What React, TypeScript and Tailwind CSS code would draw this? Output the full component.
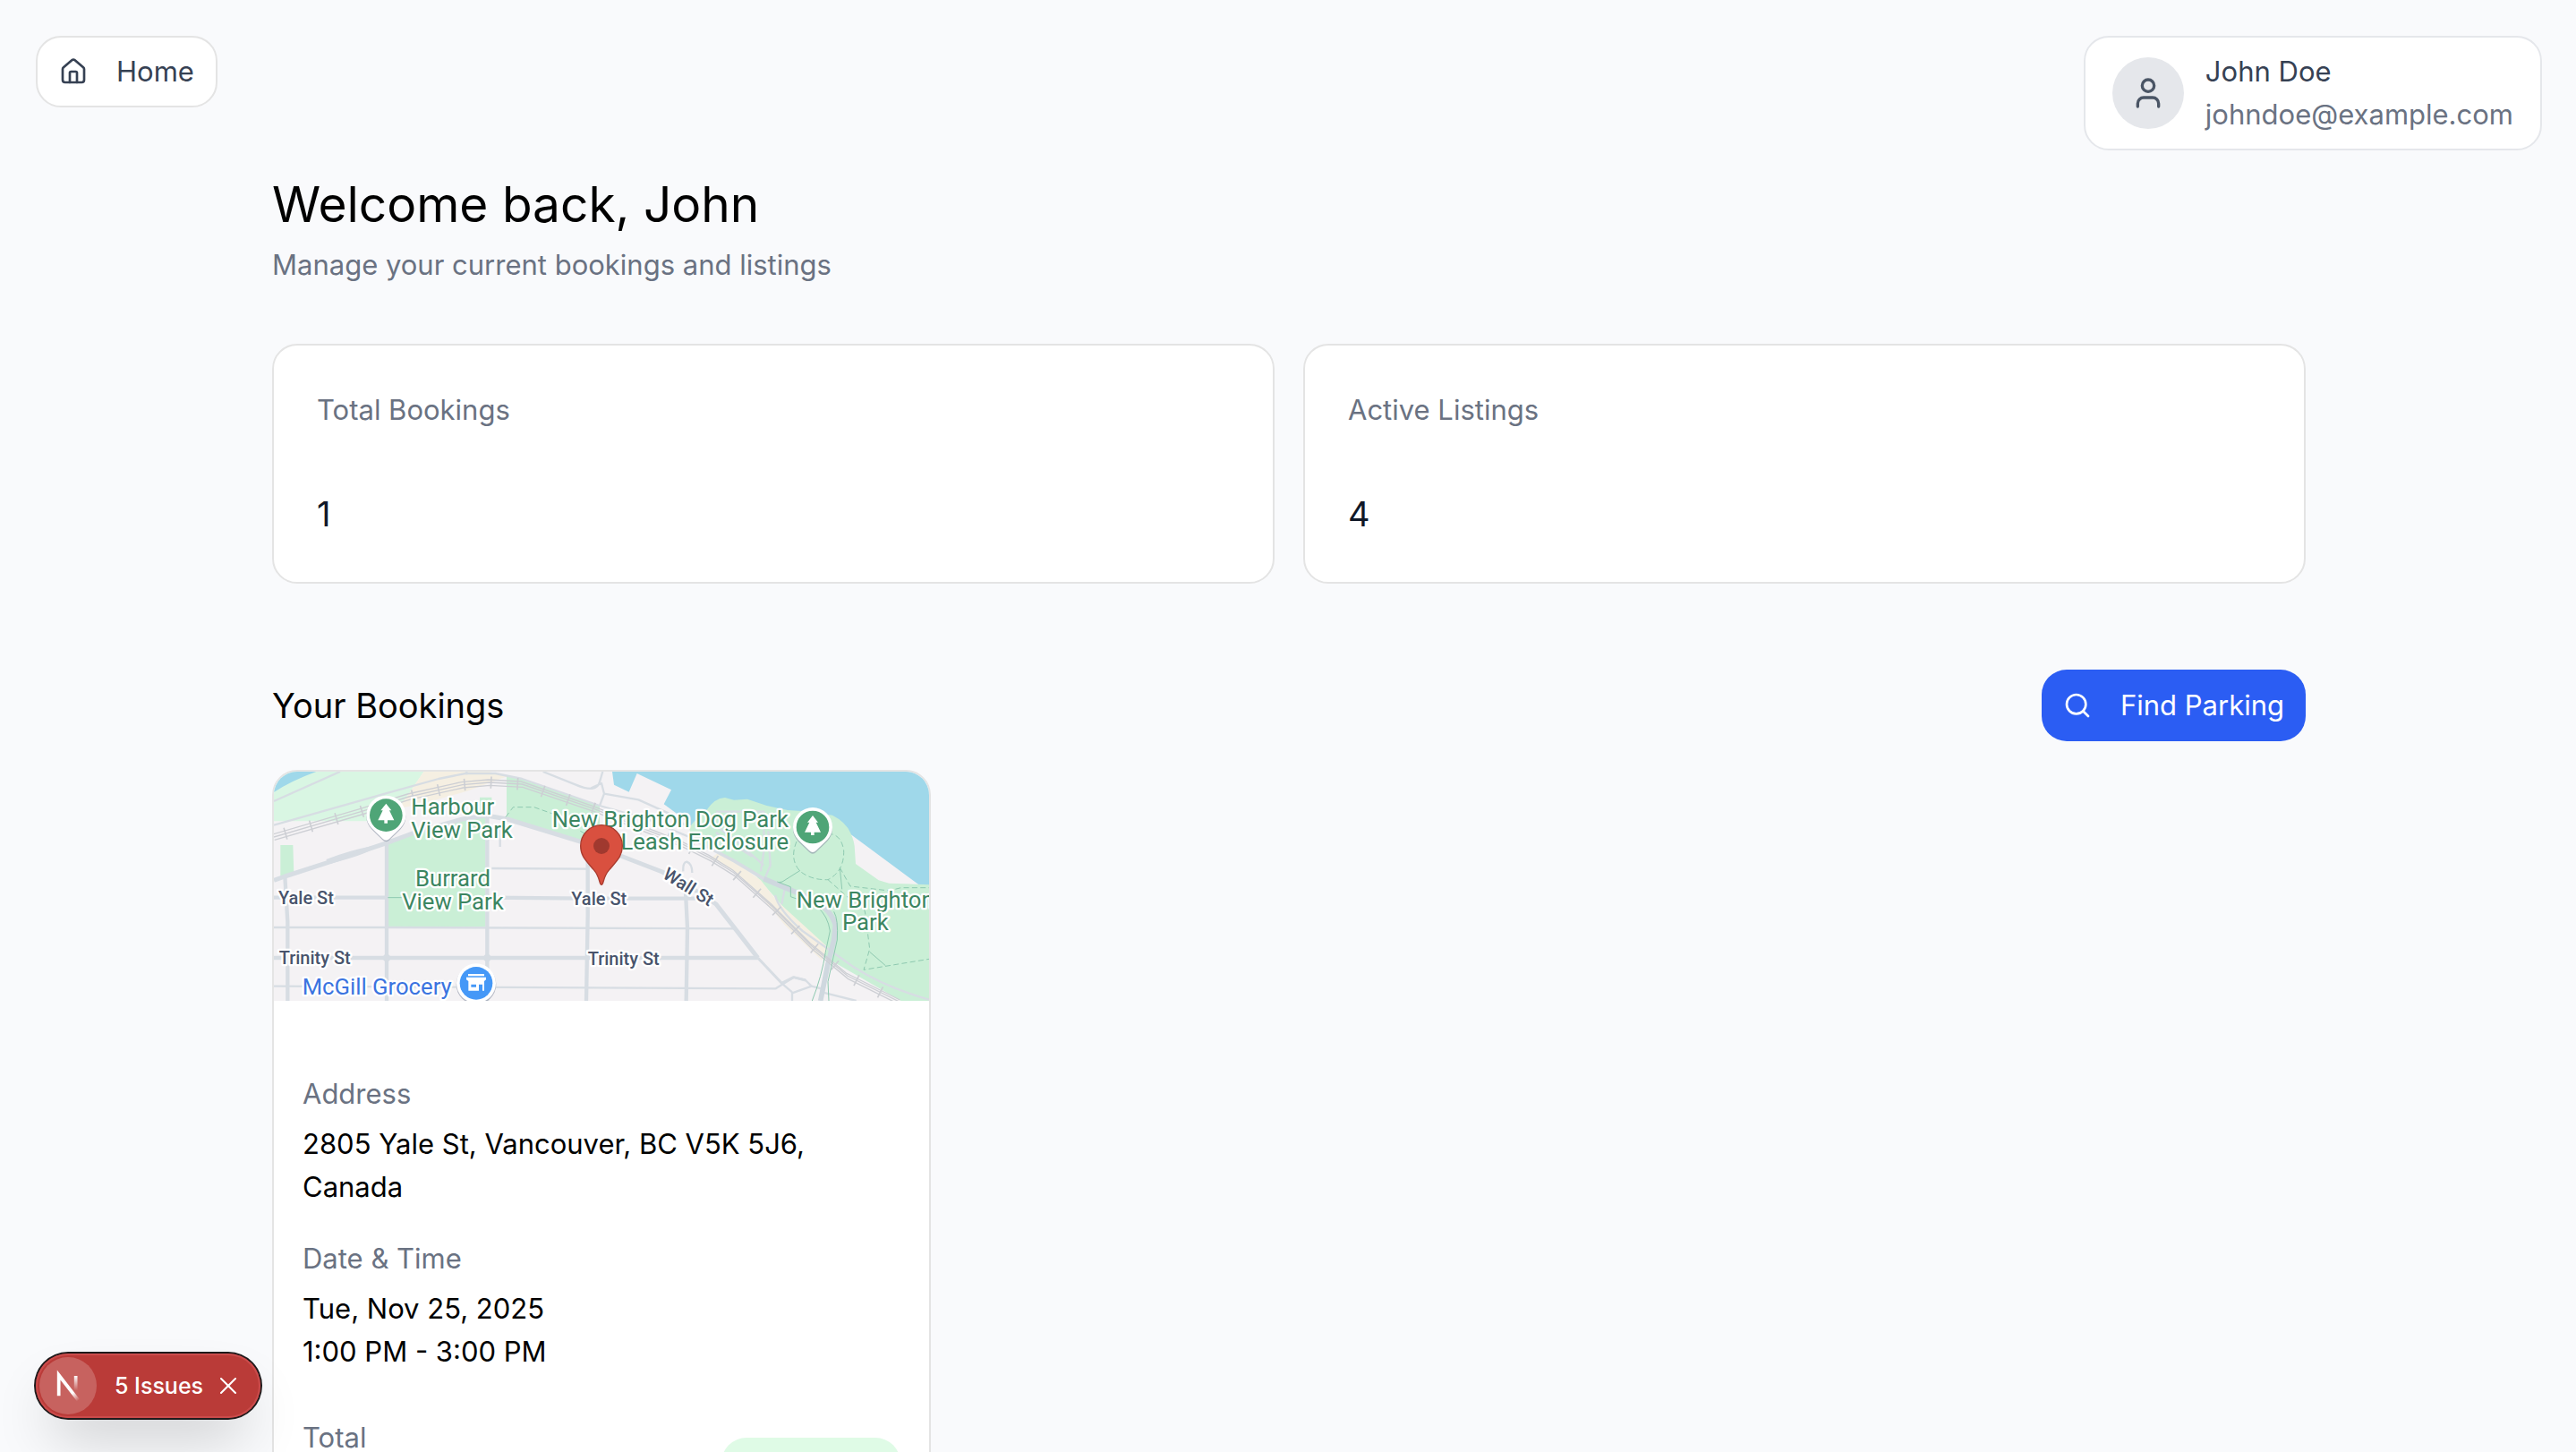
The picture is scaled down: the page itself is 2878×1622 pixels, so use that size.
import { House, Search, User, X } from 'lucide-react';

const user = { firstName: 'John', name: 'John Doe', email: 'johndoe@example.com' };

const stats = [
  { label: 'Total Bookings', value: 1 },
  { label: 'Active Listings', value: 4 },
];

const bookings = [
  {
    id: 1,
    address: '2805 Yale St, Vancouver, BC V5K 5J6, Canada',
    date: 'Tue, Nov 25, 2025',
    time: '1:00 PM - 3:00 PM',
  },
];

const railPath =
  'M48 255 L340 170 L500 120 L680 80 L770 72 L880 78 L1120 160 L1270 220 L1420 280 L1510 325 L1590 375 L1720 490 L1850 620 L1970 720 L2150 810';

const ParkPin = ({ x, y }: { x: number; y: number }) => (
  <g transform={`translate(${x} ${y})`}>
    <path d="M-66 0 A66 66 0 1 1 66 0 C66 36 38 50 12 78 Q0 90 -12 78 C-38 50 -66 36 -66 0Z" fill="#8b93a5" opacity="0.6" transform="translate(0 5)" />
    <path d="M-66 0 A66 66 0 1 1 66 0 C66 36 38 50 12 78 Q0 90 -12 78 C-38 50 -66 36 -66 0Z" fill="#fff" />
    <circle r="55" fill="#4fa577" />
    <path d="M0 -39 L18 -16 H11 L27 17 H5 V27 H-6 V17 H-27 L-11 -16 H-18Z" fill="#fff" />
  </g>
);

const BookingMap = () => (
  <svg
    viewBox="48 36 2196 768"
    preserveAspectRatio="xMidYMid slice"
    className="block h-64 w-full"
    role="img"
    aria-label="Map of the booked parking spot"
    fontFamily="Roboto, sans-serif"
  >
    <rect x="0" y="0" width="2300" height="840" fill="#f4f2f4" />

    {/* Water and parks */}
    <path d="M48 36H550L500 110L440 202H48Z" fill="#d9f6e3" />
    <path d="M48 36H190Q105 67 48 105Z" fill="#9fd8ea" />
    <path d="M550 36H770L830 52L700 100L540 145L465 160L500 110Z" fill="#f5efe2" />
    <path d="M828 50L890 62L1140 150V290L1080 272L828 188Z" fill="#caefd6" />
    <path d="M430 275L520 242L690 195L738 190V122H778V190L757 195V556H430Z" fill="#caefd6" />
    <path d="M70 282H112L115 378L70 392Z" fill="#caefd6" />
    <path d="M1182 36L1188 80L1238 104L1265 42L1380 97L1355 145L1410 185L1460 230H1960L2244 440V36Z" fill="#9fd8ea" />
    <path
      d="M1440 225Q1455 200 1500 163Q1525 125 1560 123L1590 131L1635 128L1700 150L1770 165L1850 170L1920 182Q1965 205 1980 240Q1995 270 1995 300L1998 345L2075 400L2110 410L2244 415V804H2150L1900 660L1730 460L1650 370L1540 310L1450 260Z"
      fill="#caefd6"
    />
    <path d="M1540 305L1610 350L1680 400L1735 470L1905 625L1885 668L1760 550L1670 440L1590 370L1515 325Z" fill="#f5efe2" />

    {/* Streets */}
    <g fill="none" stroke="#d7dde3" strokeLinejoin="round">
      <g strokeWidth="7">
        <path d="M48 135Q160 85 270 36" />
        <path d="M48 215L420 110L600 60L690 42H790L880 60L1140 150L1300 195L1440 255" />
        <path d="M950 36L1060 80Q1130 110 1140 70L1150 36M1110 92L1146 75L1155 110L1270 130L1370 175L1440 225M1155 110L1140 150" />
        <path d="M48 558H430L1590 562" />
        <path d="M48 755L1730 763L1790 725L1830 735L1850 755" />
        <path d="M778 360L1095 362M806 230V288M694 36V46" />
        <path d="M1530 170H1690V235M1690 235L1692 290L1680 370M1705 235L1712 350L1695 390M1540 225L1600 270L1690 350M1530 240L1650 320M1760 430L1750 480" />
        <path d="M1728 450Q1740 500 1820 570L1990 690Q2100 760 2244 800" />
        <path d="M1420 370Q1418 340 1432 338Q1450 345 1450 375" />
        <path d="M1750 745L1785 775M1785 804V778L1850 755L1890 765M1885 775L2000 804" />
      </g>
      <g strokeWidth="13">
        <path d="M48 458H430M763 458L1100 461L1480 461" />
        <path d="M48 660H426L1670 660" />
        <path d="M85 388L94 540V804M426 275V804M763 190V804M1100 330V520L1095 804" />
        <path d="M1428 440L1434 560L1430 804" />
      </g>
      <path d="M48 400L85 387L230 340L420 277L520 240L680 195L760 183L830 195L1080 272L1210 318L1350 372L1440 420L1530 480L1670 660" strokeWidth="15" />
      <path d="M225 335Q300 305 380 290Q350 310 235 340" strokeWidth="10" />
      <path d="M1670 660L1750 745L1790 725L1830 735" strokeWidth="9" />
      <path d="M1440 255L1590 335L1690 395L1810 445" strokeWidth="11" />
      <path d="M1690 395L1810 445Q1910 480 1930 550L1925 600L1905 680L1880 804" stroke="#cfd8df" strokeWidth="17" />
    </g>
    <circle cx="426" cy="660" r="13" fill="#d7dde3" />
    <circle cx="763" cy="660" r="13" fill="#d7dde3" />

    {/* Rail lines */}
    <g fill="none" stroke="#cdcfd4">
      <path d={railPath} strokeWidth="4" />
      <path d={railPath} strokeWidth="4" transform="translate(2 10)" />
      <path d={railPath} strokeWidth="4" transform="translate(-4 -9)" />
      <path d={railPath} strokeWidth="40" strokeDasharray="5 84" strokeDashoffset="-38" />
    </g>

    {/* Walking paths */}
    <g fill="none" stroke="#8ec9b0" strokeWidth="3">
      <path d="M825 188L850 155H920L985 178M1075 235L1110 255" strokeDasharray="18 10" />
      <path
        d="M1800 270Q1775 330 1812 370Q1850 400 1905 398Q1960 370 1958 300Q1950 250 1915 245M1905 398L1975 460M1945 358L1980 420L2110 435L2150 425H2244M2020 470L2030 510L2045 630L2025 700L2244 664"
        strokeDasharray="18 10"
      />
      <path d="M1740 407L1752 405L1812 367M1945 358L1952 430M2045 640L2098 686M1735 405L1780 422V455L1800 462M430 458H480" />
      <path d="M1870 490Q1905 520 1912 570L1897 640Q1885 720 1852 804M1925 505Q1940 530 1936 600L1905 740L1908 804" />
    </g>

    {/* Labels */}
    <g stroke="#fff" strokeWidth="14" strokeLinejoin="round" paintOrder="stroke">
      <g fill="#3c8661" fontSize="77">
        <text x="508" y="181">Harbour</text>
        <text x="508" y="258">View Park</text>
        <text x="648" y="419" textAnchor="middle">Burrard</text>
        <text x="648" y="497" textAnchor="middle">View Park</text>
        <text x="1773" y="221" textAnchor="end">New Brighton Dog Park</text>
        <text x="1773" y="298" textAnchor="end">Leash Enclosure</text>
        <text x="1799" y="491">New Brighton</text>
        <text x="1953" y="568">Park</text>
      </g>
      <g fill="#48546c" fontSize="60" fontWeight="500">
        <text x="63" y="480">Yale St</text>
        <text x="1045" y="482">Yale St</text>
        <text x="65" y="681">Trinity St</text>
        <text x="1100" y="683">Trinity St</text>
        <text transform="translate(1348 390) rotate(32)">Wall St</text>
      </g>
      <text x="143" y="782" fill="#3b74e0" fontSize="77">McGill Grocery</text>
    </g>

    {/* Pins */}
    <ParkPin x={424} y={182} />
    <ParkPin x={1854} y={222} />
    <g transform="translate(726 745)">
      <circle r="67" cy="4" fill="#8b93a5" opacity="0.6" />
      <circle r="66" fill="#fff" />
      <circle r="55" fill="#4598f7" />
      <path d="M-27 -31H27V-24H-27ZM-33 -20H33V-12L27 -7V25H21V4H9V25H-26V-7L-33 -12ZM-17 4V13H0V4Z" fill="#fff" fillRule="evenodd" />
    </g>
    <path
      d="M1146 415C1138 415 1142 390 1120 365C1092 332 1076 318 1076 285A70 70 0 0 1 1216 285C1216 318 1200 332 1172 365C1150 390 1154 415 1146 415Z"
      fill="#d9503f"
      stroke="#a93c2f"
      strokeWidth="4"
    />
    <circle cx="1146" cy="285" r="27" fill="#a0392f" />
  </svg>
);

const NextLogo = () => (
  <svg viewBox="0 0 32 32" className="size-16" fill="none" aria-hidden="true">
    <defs>
      <linearGradient id="diagonal" x1="9.96" y1="11.12" x2="15.48" y2="17.97" gradientUnits="userSpaceOnUse">
        <stop stopColor="#fff" />
        <stop offset="0.6" stopColor="#fff" stopOpacity="0" />
      </linearGradient>
      <linearGradient id="stem" x1="11.82" y1="1.4" x2="11.79" y2="9.63" gradientUnits="userSpaceOnUse">
        <stop stopColor="#fff" />
        <stop offset="1" stopColor="#fff" stopOpacity="0" />
      </linearGradient>
    </defs>
    <g transform="translate(8.5 9)">
      <path d="M13.3 15.2L2.34 1V12.6" stroke="url(#diagonal)" strokeWidth="1.86" />
      <path d="M11.83 1.5V10" stroke="url(#stem)" strokeWidth="1.86" />
    </g>
  </svg>
);

const App = () => {
  return (
    <div className="relative h-screen overflow-hidden bg-[#f9fafc] pl-0.5 font-['Inter',sans-serif] text-[31px] leading-[48px] text-black">
      <header className="flex items-start justify-between px-[38px] pt-10">
        <a href="#home" className="flex h-20 items-center gap-8 rounded-[28px] border-2 border-[#e4e4e4] bg-white px-6 text-gray-700">
          <House className="size-8" />
          Home
        </a>
        <div className="flex items-center gap-6 rounded-[28px] border-2 border-gray-200 bg-white px-[30px] py-3.5">
          <div className="flex size-20 items-center justify-center rounded-full bg-gray-200 text-gray-600">
            <User className="size-10" />
          </div>
          <div>
            <p className="text-gray-700">{user.name}</p>
            <p className="text-gray-500">{user.email}</p>
          </div>
        </div>
      </header>

      <main className="mx-auto max-w-[2272px] pt-6">
        <h1 className="text-[55px] leading-[72px]">Welcome back, {user.firstName}</h1>
        <p className="mt-2 text-gray-500">Manage your current bookings and listings</p>

        {/* Stats */}
        <div className="mt-16 grid grid-cols-2 gap-8">
          {stats.map((stat) => (
            <div key={stat.label} className="rounded-[28px] border-2 border-[#e4e4e4] bg-white p-12">
              <p className="text-gray-500">{stat.label}</p>
              <p className="mt-16 text-[38px] leading-[56px] text-gray-900">{stat.value}</p>
            </div>
          ))}
        </div>

        {/* Bookings */}
        <div className="mt-24 flex items-center justify-between">
          <h2 className="text-[38px] leading-[56px]">Your Bookings</h2>
          <button type="button" className="flex h-20 items-center gap-8 rounded-[28px] bg-[#2b5df3] px-6 text-white">
            <Search className="size-8" />
            Find Parking
          </button>
        </div>

        <div className="mt-8 grid grid-cols-3 gap-8">
          {bookings.map((booking) => (
            <div key={booking.id} className="overflow-hidden rounded-[28px] border-2 border-[#e4e4e4] bg-white">
              <BookingMap />
              <div className="px-8 pt-20 pb-8">
                <p className="text-gray-500">Address</p>
                <p className="mt-2">{booking.address}</p>
                <p className="mt-8 text-gray-500">Date &amp; Time</p>
                <p className="mt-2">{booking.date}</p>
                <p>{booking.time}</p>
                <div className="mt-12 flex h-[104px] items-center justify-between">
                  <p className="self-start text-gray-500">Total</p>
                  <span className="h-14 w-[200px] rounded-full bg-[#dffbe6]" />
                </div>
              </div>
            </div>
          ))}
        </div>
      </main>

      {/* Dev overlay */}
      <div className="absolute bottom-[38px] left-10 flex h-[72px] items-center rounded-full bg-[#ba3b38] pr-5 pl-1 text-[25px] font-medium text-white shadow-[0_0_0_2px_#1f1a1b,inset_0_0_0_2px_#cb4b4b,0_32px_64px_-16px_rgba(0,0,0,0.24)]">
        <div className="rounded-full bg-white/20">
          <NextLogo />
        </div>
        <span className="ml-5">5 Issues</span>
        <button type="button" aria-label="Hide issues" className="ml-3">
          <X className="size-8" strokeWidth={1.5} />
        </button>
      </div>
    </div>
  );
};

export default App;
